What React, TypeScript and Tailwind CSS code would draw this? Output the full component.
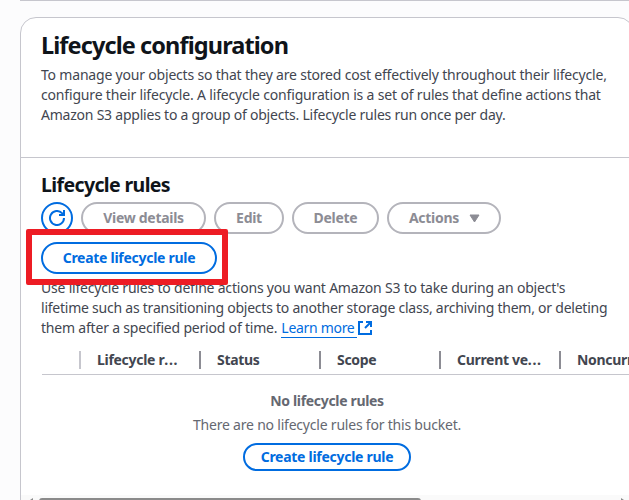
import React from "react";

const columns = [
  { label: "Lifecycle r", dots: true, bar: "border-[#c6c6cd]" },
  { label: "Status", dots: false, bar: "border-[#8c8c94]" },
  { label: "Scope", dots: false, bar: "border-[#8c8c94]" },
  { label: "Current ve", dots: true, bar: "border-[#8c8c94]" },
  { label: "Noncurr", dots: false, bar: "border-[#8c8c94]" },
];

function Pill({ children, className }: { children: React.ReactNode; className: string }) {
  return (
    <button
      className={`flex shrink-0 items-center justify-center rounded-full border-2 bg-white text-[14px] leading-5 font-bold tracking-[-0.28px] whitespace-nowrap ${className}`}
    >
      {children}
    </button>
  );
}

function RefreshIcon() {
  return (
    <svg className="shrink-0" width="16" height="16" viewBox="0 0 16 16" fill="none" stroke="currentColor" strokeWidth="2">
      <path d="M15 8a7 7 0 1 1-2-4.9l1.6 1.7" />
      <path d="M15 0v5h-5" />
    </svg>
  );
}

function ExternalIcon() {
  return (
    <svg className="shrink-0" width="16" height="16" viewBox="0 0 16 16" fill="none" stroke="currentColor" strokeWidth="2">
      <path d="M6 2H2v12h12v-4" />
      <path d="M9 2h5v5M14 2 8 8" />
    </svg>
  );
}

export default function App() {
  return (
    <div className="h-[500px] w-[629px] overflow-hidden bg-[#fcfcfd] pl-5 font-['Noto_Sans','Open_Sans',sans-serif] text-[14px] leading-5 text-[#424650]">
      <div className="h-px w-[614px] bg-[#c6c6cd]" />
      <section className="mt-4 flex h-[520px] w-[614px] flex-col rounded-2xl border border-[#c6c6cd] bg-white">
        <header className="h-[140px] shrink-0 border-b border-[#c6c6cd] px-5 pt-[11px]">
          <h2 className="h-9 text-[23.5px] leading-[32px] font-bold tracking-[-0.9px] whitespace-nowrap text-[#0f141a]">
            Lifecycle configuration
          </h2>
          <p className="whitespace-nowrap">
            <span className="block w-fit tracking-[-0.195px]">To manage your objects so that they are stored cost effectively throughout their lifecycle,</span>
            <span className="block w-fit tracking-[-0.17px]">configure their lifecycle. A lifecycle configuration is a set of rules that define actions that</span>
            <span className="block w-fit tracking-[-0.225px]">Amazon S3 applies to a group of objects. Lifecycle rules run once per day.</span>
          </p>
        </header>

        <div className="relative shrink-0 px-5 pt-[15px]">
          <h3 className="h-[29px] text-[19.5px] leading-6 font-bold tracking-[-0.62px] whitespace-nowrap text-[#0f141a]">
            Lifecycle rules
          </h3>
          <div className="flex gap-2">
            <Pill className="h-8 w-8 border-[#006ce0] text-[#006ce0]">
              <RefreshIcon />
            </Pill>
            <Pill className="h-8 w-[125px] border-[#b4b4bb] text-[#8c8c94]">View details</Pill>
            <Pill className="h-8 w-[70px] border-[#b4b4bb] text-[#8c8c94]">Edit</Pill>
            <Pill className="h-8 w-[87px] border-[#b4b4bb] text-[#8c8c94]">Delete</Pill>
            <Pill className="h-8 w-[114px] gap-2.5 border-[#b4b4bb] pl-px text-[#8c8c94]">
              <span>Actions</span>
              <svg width="11" height="9" viewBox="0 0 11 9" fill="currentColor" stroke="currentColor" strokeLinejoin="round">
                <path d="M1 1h9L5.5 8z" />
              </svg>
            </Pill>
          </div>
          <div className="mt-2 flex">
            <Pill className="h-8 w-44 border-[#006ce0] text-[#006ce0]">Create lifecycle rule</Pill>
          </div>
          <p className="mt-1 whitespace-nowrap">
            <span className="block w-fit tracking-[-0.2px]">Use lifecycle rules to define actions you want Amazon S3 to take during an object's</span>
            <span className="block w-fit tracking-[-0.235px]">lifetime such as transitioning objects to another storage class, archiving them, or deleting</span>
            <span className="flex items-start">
              <span className="mr-1 tracking-[-0.2px]">them after a specified period of time.</span>
              <a className="h-5 w-[76px] border-b border-[#006ce0] tracking-[-0.3px] text-[#006ce0]">Learn more</a>
              <span className="pt-0.5 text-[#006ce0]"><ExternalIcon /></span>
            </span>
          </p>
          <div className="absolute top-[71px] left-[5px] h-14 w-[202px] rounded-[2px] border-[6px] border-[#ed1c24]" />
        </div>

        <div className="ml-[21px] shrink-0 overflow-hidden border-b border-[#c6c6cd] pt-[13px] pb-[5px]">
          <div className="flex w-[700px] pl-[37px]">
            {columns.map((c) => (
              <div key={c.label} className={`h-[18px] w-[120px] shrink-0 border-l-2 pl-4 leading-[18px] font-bold tracking-[-0.3px] whitespace-nowrap ${c.bar}`}>
                {c.label}
                {c.dots && <span className="tracking-[0.6px]">...</span>}
              </div>
            ))}
          </div>
        </div>

        <div className="flex h-[120px] w-[612px] shrink-0 flex-col items-center pt-4 text-[#656871]">
          <b className="leading-5 tracking-[-0.33px]">No lifecycle rules</b>
          <p className="mt-1 tracking-[-0.21px]">There are no lifecycle rules for this bucket.</p>
          <Pill className="mt-2 h-7 w-[168px] border-[#006ce0] text-[#006ce0]">Create lifecycle rule</Pill>
        </div>
        <div className="flex h-4 shrink-0 items-start bg-[#fafafa] pt-[3px]">
          <svg width="18" height="12" viewBox="0 0 18 12" fill="#8b8b8b">
            <path d="M12 0v8L6 4z" />
          </svg>
          <div className="h-[6px] w-[382px] rounded-full bg-[#8b8b8b]" />
          <svg className="ml-[196px]" width="16" height="12" viewBox="0 0 16 12" fill="#8b8b8b">
            <path d="M4 0v8l6-4z" />
          </svg>
        </div>
      </section>
    </div>
  );
}
